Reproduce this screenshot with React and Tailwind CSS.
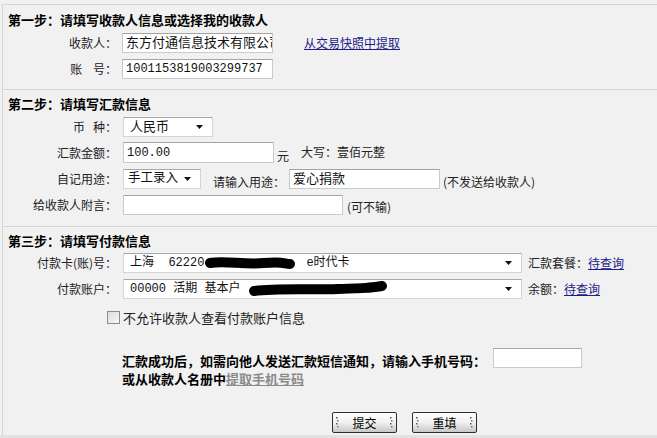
import React from 'react';

const Arrow = () => (
  <svg width="8" height="5" viewBox="0 0 8 5" className="shrink-0">
    <path d="M0 0 H7 L3.5 4 Z" fill="#111" />
  </svg>
);

const Field = ({ w, children, className = '' }) => (
  <div className={`h-full bg-white border border-[#cacaca] border-t-[#a4a4a4] flex items-center pl-[3px] overflow-hidden whitespace-nowrap font-['Liberation_Mono','Noto_Sans_CJK_SC',monospace] text-[12px] text-[#111] ${w} ${className}`}>
    {children}
  </div>
);

const Select = ({ w, children, pl = 'pl-[6px]' }) => (
  <div className={`h-full bg-white border border-[#d4d4d4] border-t-[#a8a8a8] flex items-center justify-between ${pl} pr-[8px] whitespace-nowrap overflow-hidden font-['Liberation_Mono','Noto_Sans_CJK_SC',monospace] text-[12px] text-[#111] ${w}`}>
    <div className="flex items-center">{children}</div>
    <Arrow />
  </div>
);

const Label = ({ children }) => (
  <div className="w-[115px] shrink-0 text-right text-[12px] text-[#222] pr-[1px]">{children}</div>
);

const Title = ({ children, h }) => (
  <div className={`${h} flex items-center pl-[5px] text-[13px] font-bold text-black`}>{children}</div>
);

const Grip = () => (
  <svg width="3" height="14" viewBox="0 0 3 14">
    <rect x="0" y="1" width="1.5" height="1.5" fill="#555" />
    <rect x="1" y="4" width="1.5" height="1.5" fill="#777" />
    <rect x="0" y="7" width="1.5" height="1.5" fill="#555" />
    <rect x="1" y="10" width="1.5" height="1.5" fill="#777" />
  </svg>
);

const Button = ({ children }) => (
  <div className="w-[65px] h-[21px] border border-[#2e2e2e] rounded-[2px] bg-gradient-to-b from-white via-[#f0f0f0] to-[#c8c8c8] flex items-center justify-between px-[3px] text-[12px] text-black">
    <Grip />
    <span>{children}</span>
    <Grip />
  </div>
);

const Blob = ({ w, d }) => (
  <svg width={w} height="16" viewBox={`0 0 ${w} 16`} className="shrink-0">
    <path d={d} stroke="#000" strokeWidth="10" strokeLinecap="round" fill="none" />
  </svg>
);

export default function App() {
  return (
    <div className="w-[657px] h-[438px] bg-[#f1f1f1] overflow-hidden font-['Noto_Sans_CJK_SC','Liberation_Sans',sans-serif] leading-none flex flex-col">
      <div className="ml-[2px] mt-[4px] border-l border-t border-[#d6d6d6] flex-1 flex flex-col">
        {/* 第一步 */}
        <div className="pb-[10px]">
          <Title h="h-[28px]">第一步：请填写收款人信息或选择我的收款人</Title>
          <div className="flex items-center h-[20px]">
            <Label>收款人：</Label>
            <Field w="w-[151px] ml-[4px]"><span className="text-[13px]">东方付通信息技术有限公司</span></Field>
            <a className="ml-[31px] text-[12px] text-[#1c1c8a] underline cursor-pointer">从交易快照中提取</a>
          </div>
          <div className="flex items-center h-[20px] mt-[6px]">
            <Label>账&nbsp;&nbsp;&nbsp;&nbsp;号：</Label>
            <Field w="w-[151px] ml-[4px]">1001153819003299737</Field>
          </div>
        </div>

        {/* 第二步 */}
        <div className="border-t border-[#d6d6d6] pb-[11px]">
          <Title h="h-[27px]">第二步：请填写汇款信息</Title>
          <div className="flex items-center h-[20px]">
            <Label>币&nbsp;&nbsp;&nbsp;种：</Label>
            <div className="ml-[5px] h-full">
              <Select w="w-[90px]"><span className="text-[13px]">人民币</span></Select>
            </div>
          </div>
          <div className="flex items-end h-[21px] mt-[5px] text-[12px] text-[#222]">
            <div className="self-center"><Label>汇款金额：</Label></div>
            <Field w="w-[151px] ml-[5px]">100.00</Field>
            <span className="ml-[3px] mb-[1px]">元</span>
            <span className="ml-[12px] mb-[5px]">大写：壹佰元整</span>
          </div>
          <div className="flex items-center h-[20px] mt-[6px] text-[12px] text-[#222]">
            <Label>自记用途：</Label>
            <div className="ml-[5px] h-full">
              <Select w="w-[78px]" pl="pl-[4px]"><span className="text-[12.5px]">手工录入</span></Select>
            </div>
            <span className="ml-[12px] mt-[5px]">请输入用途：</span>
            <Field w="w-[151px] ml-[4px]"><span className="text-[13px]">爱心捐款</span></Field>
            <span className="ml-[3px] mt-[5px]">(不发送给收款人)</span>
          </div>
          <div className="flex items-center h-[20px] mt-[6px] text-[12px] text-[#222]">
            <Label>给收款人附言：</Label>
            <Field w="w-[220px] ml-[5px]"></Field>
            <span className="ml-[4px] mt-[3px]">(可不输)</span>
          </div>
        </div>

        {/* 第三步 */}
        <div className="border-t border-[#d6d6d6] flex-1 flex flex-col">
          <Title h="h-[26px]">第三步：请填写付款信息</Title>
          <div className="flex items-center h-[20px] text-[12px] text-[#222]">
            <Label>付款卡(账)号：</Label>
            <div className="ml-[5px] h-full">
              <Select w="w-[399px]">
                <span>上海&nbsp;&nbsp;62220</span>
                <Blob w={92} d="M6 8 C20 5 40 10 60 8 S80 9 86 9" />
                <span className="ml-[10px]">e时代卡</span>
              </Select>
            </div>
            <span className="ml-[6px]">汇款套餐：</span>
            <a className="text-[#1c1c8a] underline cursor-pointer">待查询</a>
          </div>
          <div className="flex items-center h-[20px] mt-[6px] text-[12px] text-[#222]">
            <Label>付款账户：</Label>
            <div className="ml-[5px] h-full">
              <Select w="w-[399px]">
                <span>00000&nbsp;活期&nbsp;基本户&nbsp;</span>
                <Blob w={140} d="M6 10 C30 7 60 9 90 8 S120 7 134 5" />
              </Select>
            </div>
            <span className="ml-[6px]">余额：</span>
            <a className="text-[#1c1c8a] underline cursor-pointer">待查询</a>
          </div>
          <div className="flex items-center h-[14px] mt-[11px] ml-[104px] text-[12px] text-[#222]">
            <div className="w-[13px] h-[13px] border border-[#8c8c8c] bg-gradient-to-br from-[#dcdcdc] to-[#f8f8f8]" />
            <span className="ml-[3px] text-[13px]">不允许收款人查看付款账户信息</span>
          </div>
          <div className="flex mt-[24px] ml-[119px]">
            <div className="w-[371px] pt-[4px] text-[13px] font-bold text-black leading-[18px]">
              <div>汇款成功后，如需向他人发送汇款短信通知，请输入手机号码：</div>
              <div>
                或从收款人名册中<a className="text-[#8a8a8a] underline cursor-pointer">提取手机号码</a>
              </div>
            </div>
            <div className="w-[89px] h-[20px] bg-white border border-[#cacaca] border-t-[#a8a8a8]" />
          </div>
          <div className="flex gap-[15px] ml-[329px] mt-[24px]">
            <Button>提交</Button>
            <Button>重填</Button>
          </div>
        </div>
      </div>
      <div className="h-[3px] bg-[#e2e2e2]" />
    </div>
  );
}
